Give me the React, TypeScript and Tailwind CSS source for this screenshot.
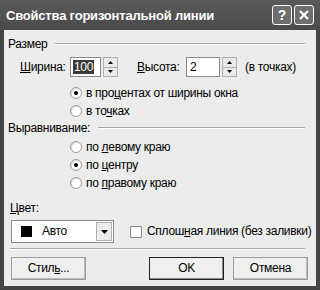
import React from "react";

const font = { fontFamily: '"Liberation Sans", Arial, sans-serif' };

function Radio({ checked }: { checked?: boolean }) {
  return (
    <span className="w-[12px] h-[12px] rounded-full bg-white border border-[#9a9a9a] flex items-center justify-center shrink-0 shadow-[inset_1px_1px_1px_rgba(0,0,0,0.15)]">
      {checked && <span className="w-[4px] h-[4px] rounded-full bg-black" />}
    </span>
  );
}

function RadioRow({ checked, children }: { checked?: boolean; children: React.ReactNode }) {
  return (
    <div className="flex items-center gap-[4px] pl-[62px] h-[18px]">
      <Radio checked={checked} />
      <span>{children}</span>
    </div>
  );
}

function Spinner() {
  return (
    <div className="flex flex-col w-[15px] h-[20px] ml-[2px]">
      <div className="flex-1 bg-[#e9e9e9] border border-[#b0b0b0] flex items-center justify-center">
        <svg width="5" height="3" viewBox="0 0 5 3"><path d="M0 3h5L2.5 0z" fill="#000" /></svg>
      </div>
      <div className="flex-1 bg-[#e9e9e9] border border-[#b0b0b0] border-t-0 flex items-center justify-center">
        <svg width="5" height="3" viewBox="0 0 5 3"><path d="M0 0h5L2.5 3z" fill="#000" /></svg>
      </div>
    </div>
  );
}

function GroupLabel({ children }: { children: React.ReactNode }) {
  return (
    <div className="flex items-center gap-[8px] h-[16px] pr-[11px]">
      <span>{children}</span>
      <div className="flex-1 h-[2px] border-t border-[#a8a8a8] border-b border-b-white" />
    </div>
  );
}

function Btn({ children, def }: { children: React.ReactNode; def?: boolean }) {
  return (
    <div
      className={`w-[75px] h-[23px] flex items-center justify-center bg-[#efefef] border ${
        def ? "border-[#222] shadow-[inset_-1px_-1px_0_#888]" : "border-[#9c9c9c] shadow-[inset_-1px_-1px_0_#bbb]"
      }`}
    >
      {children}
    </div>
  );
}

export default function App() {
  return (
    <div className="w-[320px] h-[290px] bg-[#454545] flex flex-col text-[12px] leading-[15px] tracking-[-0.3px] text-black overflow-hidden" style={font}>
      {/* Title bar */}
      <div className="h-[30px] shrink-0 flex items-center pl-[6px] pr-[6px] bg-gradient-to-b from-[#5a5a5a] to-[#4a4a4a]">
        <span className="flex-1 text-white font-bold text-[13px] tracking-[-0.2px]">Свойства горизонтальной линии</span>
        <div className="flex gap-[2px]">
          <div className="w-[20px] h-[20px] rounded-[3px] border border-white bg-[#6e6e6e] flex items-center justify-center text-white font-bold text-[14px] leading-none">?</div>
          <div className="w-[20px] h-[20px] rounded-[3px] border border-white bg-[#6e6e6e] flex items-center justify-center">
            <svg width="12" height="12" viewBox="0 0 12 12"><path d="M2 2l8 8M10 2l-8 8" stroke="#fff" strokeWidth="2.2" /></svg>
          </div>
        </div>
      </div>

      {/* Body */}
      <div className="flex-1 mx-[4px] mb-[4px] bg-[#ececec] flex flex-col pl-[4px] pt-[6px]">
        <GroupLabel>Размер</GroupLabel>

        <div className="flex items-center h-[20px] mt-[5px] pl-[12px]">
          <span className="w-[50px]"><u>Ш</u>ирина:</span>
          <div className="w-[31px] h-[20px] bg-white border border-[#8a8a8a] flex items-center px-[2px]">
            <span className="bg-[#3a3a3a] text-white px-[1px] leading-[14px]">100</span>
          </div>
          <Spinner />
          <span className="ml-[19px] w-[49px]"><u>В</u>ысота:</span>
          <div className="w-[34px] h-[20px] bg-white border border-[#8a8a8a] flex items-center px-[3px]">2</div>
          <Spinner />
          <span className="ml-[8px]">(в точках)</span>
        </div>

        <div className="mt-[7px] flex flex-col">
          <RadioRow checked>в про<u>ц</u>ентах от ширины окна</RadioRow>
          <RadioRow>в то<u>ч</u>ках</RadioRow>
        </div>

        <GroupLabel>Выравнивание:</GroupLabel>

        <div className="mt-[2px] flex flex-col">
          <RadioRow>по <u>л</u>евому краю</RadioRow>
          <RadioRow checked>по <u>ц</u>ентру</RadioRow>
          <RadioRow>по <u>п</u>равому краю</RadioRow>
        </div>

        <div className="mt-[8px] pl-[2px] h-[16px] flex items-center"><span><u>Ц</u>вет:</span></div>

        <div className="flex items-center mt-[4px] pl-[3px]">
          <div className="w-[103px] h-[23px] bg-white border border-[#8a8a8a] flex items-center">
            <span className="w-[11px] h-[11px] bg-black ml-[9px]" />
            <span className="ml-[10px] flex-1">Авто</span>
            <div className="w-[16px] h-[19px] mr-[1px] bg-[#ececec] border border-[#b0b0b0] flex items-center justify-center">
              <svg width="7" height="4" viewBox="0 0 7 4"><path d="M0 0h7L3.5 4z" fill="#000" /></svg>
            </div>
          </div>
          <span className="ml-[16px] w-[12px] h-[12px] bg-white border border-[#8a8a8a] shrink-0" />
          <span className="ml-[5px] whitespace-nowrap">Сплош<u>н</u>ая линия (без заливки)</span>
        </div>

        <div className="mt-[5px] ml-[2px] mr-[11px] h-[2px] border-t border-[#a8a8a8] border-b border-b-white" />

        <div className="flex items-center mt-[7px] pl-[3px]">
          <Btn>Стил<u>ь</u>...</Btn>
          <div className="ml-[63px]"><Btn def>OK</Btn></div>
          <div className="ml-[9px]"><Btn>Отмена</Btn></div>
        </div>
      </div>
    </div>
  );
}
